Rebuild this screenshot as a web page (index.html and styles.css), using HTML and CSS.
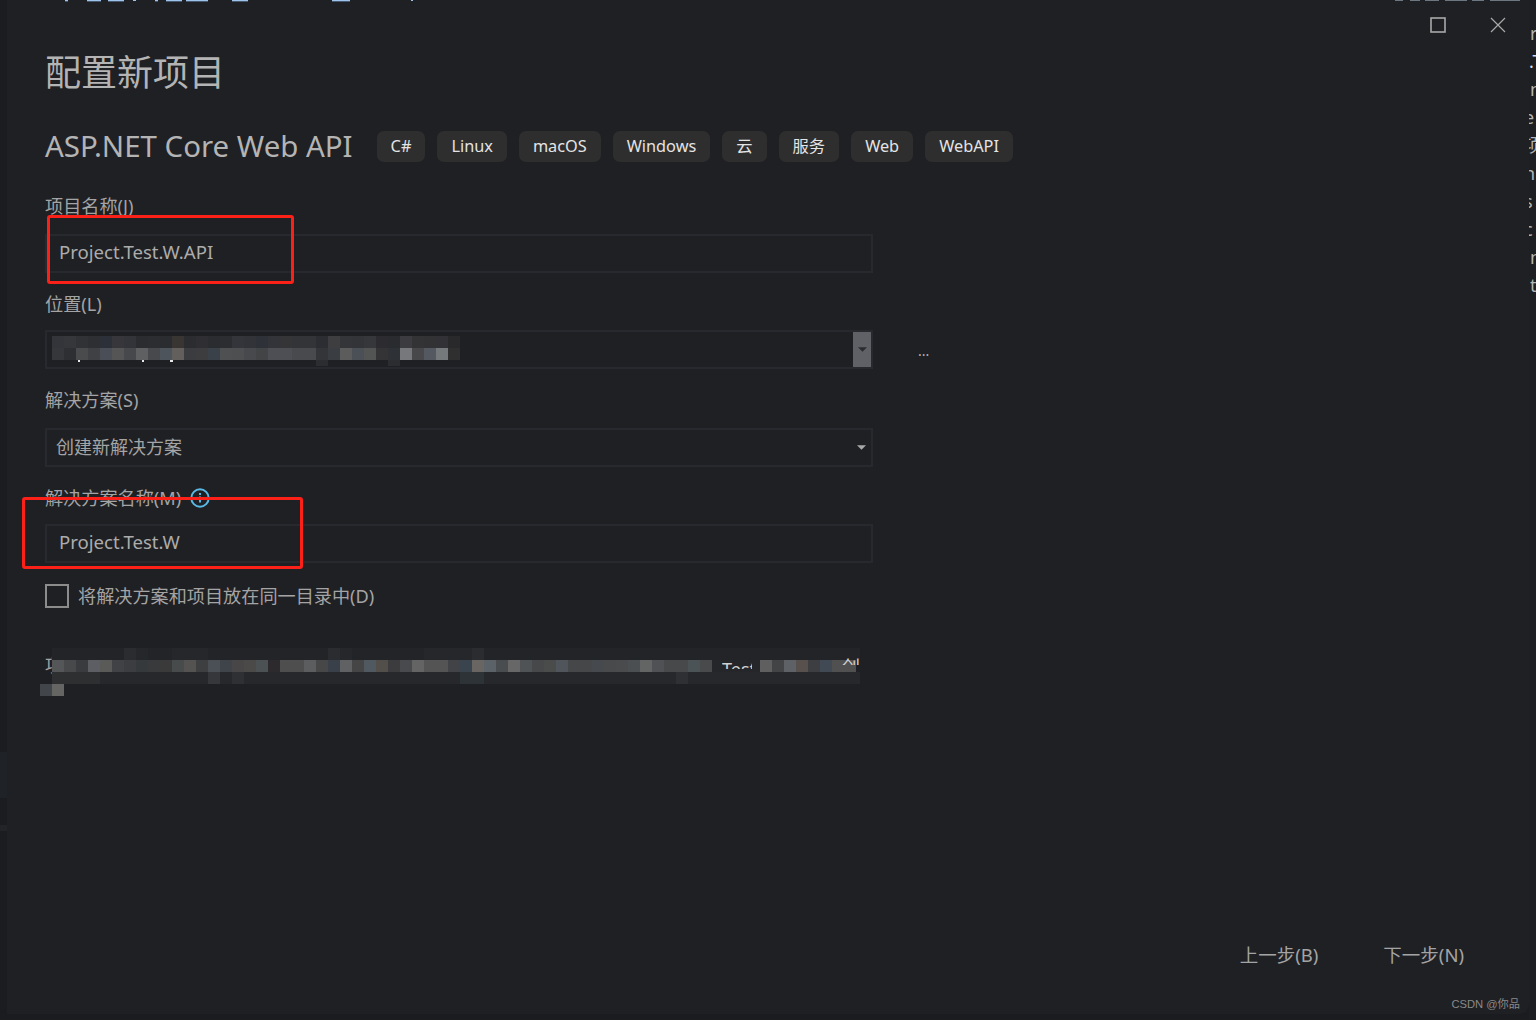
FILE: index.html
```html
<!DOCTYPE html>
<html lang="zh-CN">
<head>
<meta charset="utf-8">
<title>配置新项目</title>
<link rel="stylesheet" href="styles.css">
</head>
<body>
<div class="app">
  <div class="edge-left"><div class="edge-a"></div><div class="edge-b"></div></div>
  <main class="dialog">
    <div class="titlebar">
      <svg class="win-icon" viewBox="0 0 16 16"><rect x="1" y="1" width="14" height="14" fill="none" stroke="#a9a9a9" stroke-width="1.6"/></svg>
      <svg class="win-icon" viewBox="0 0 16 16"><path d="M1 1l14 14M15 1L1 15" fill="none" stroke="#a9a9a9" stroke-width="1.2"/></svg>
    </div>
    <h1 class="page-title">配置新项目</h1>
    <div class="template-row">
      <h2 class="template-name">ASP.NET Core Web API</h2>
      <ul class="tags">
        <li class="tag">C#</li><li class="tag">Linux</li><li class="tag">macOS</li><li class="tag">Windows</li><li class="tag">云</li><li class="tag">服务</li><li class="tag">Web</li><li class="tag">WebAPI</li>
      </ul>
    </div>
    <div class="field">
      <label class="label">项目名称(J)</label>
      <div class="input"><span class="value">Project.Test.W.API</span></div>
    </div>
    <div class="field tight">
      <label class="label">位置(L)</label>
      <div class="location-row">
        <div class="input"><div class="combo-btn"><svg class="caret" viewBox="0 0 10 5"><path d="M0 0h10L5 5z" fill="#2b2c30"/></svg></div></div>
        <span class="browse">...</span>
      </div>
    </div>
    <div class="field">
      <label class="label">解决方案(S)</label>
      <div class="input combo"><span class="value-combo">创建新解决方案</span><svg class="caret" viewBox="0 0 10 5"><path d="M0 0h10L5 5z" fill="#a9a9a9"/></svg></div>
    </div>
    <div class="field tight">
      <label class="label">解决方案名称(M)
        <svg class="info" viewBox="0 0 20 20"><circle cx="10" cy="10" r="8.7" fill="none" stroke="#57b9e4" stroke-width="2"/><path d="M10 8.5v6M10 5v2" stroke="#57b9e4" stroke-width="2"/></svg>
      </label>
      <div class="input"><span class="value">Project.Test.W</span></div>
    </div>
    <div class="check-row">
      <span class="checkbox"></span>
      <span class="check-label">将解决方案和项目放在同一目录中(D)</span>
    </div>
    <p class="desc">项目将在</p>
    <footer class="footer">
      <span class="nav-btn">上一步(B)</span>
      <span class="nav-btn">下一步(N)</span>
    </footer>
  </main>
  <div class="edge-right">
    <span>r</span><span class="dot">.T</span><span>n</span><span class="cut">e</span><span class="cut">项</span><span class="cut">n</span><span class="cut">s</span><span class="cut">c</span><span>n</span><span>t</span>
  </div>

  <svg class="top-specks" viewBox="0 0 1536 2" shape-rendering="crispEdges">
    <path stroke="#9cc4ec" stroke-width="1" d="M65 .5h3M87 .5h14M108 .5h16M133 .5h3M155 .5h3M166 .5h16M186 .5h22M232 .5h16M332 .5h18M411 .5h2"/>
    <path stroke="#47586c" stroke-width="1" d="M65 1.5h3M87 1.5h14M108 1.5h16M155 1.5h3M166 1.5h16M186 1.5h22M232 1.5h16M332 1.5h18"/>
    <path stroke="#6d7782" stroke-width="1" d="M1395 .5h8M1410 .5h10M1425 .5h14M1445 .5h22M1472 .5h12M1490 .5h30"/>
  </svg>

  <svg class="mosaic-loc" viewBox="0 330 480 40" shape-rendering="crispEdges">
    <g stroke-width="12" fill="none">
      <path stroke="#33353a" d="M52 342h12"/><path stroke="#36373a" d="M64 342h12"/><path stroke="#313236" d="M76 342h12"/><path stroke="#2e2f33" d="M88 342h12"/><path stroke="#2c3038" d="M100 342h12"/><path stroke="#37363a" d="M112 342h12"/><path stroke="#32343a" d="M124 342h12"/><path stroke="#2b2c30" d="M136 342h12"/><path stroke="#2c2d31" d="M148 342h12"/><path stroke="#2a2c30" d="M160 342h12"/><path stroke="#383533" d="M172 342h12"/><path stroke="#2b2c30" d="M184 342h12"/><path stroke="#2f2f33" d="M196 342h12"/><path stroke="#2a2c30" d="M208 342h12"/><path stroke="#2c2d31" d="M220 342h12"/><path stroke="#34353a" d="M232 342h12"/><path stroke="#323338" d="M244 342h12"/><path stroke="#2e3238" d="M256 342h12"/><path stroke="#33343a" d="M268 342h12"/><path stroke="#353437" d="M280 342h12"/><path stroke="#333438" d="M292 342h24"/><path stroke="#2b2d32" d="M316 342h12"/><path stroke="#3e3e40" d="M328 342h12"/><path stroke="#343538" d="M340 342h12"/><path stroke="#333438" d="M352 342h12"/><path stroke="#36373a" d="M364 342h12"/><path stroke="#2c2c30" d="M376 342h12"/><path stroke="#2a2b2f" d="M388 342h12"/><path stroke="#3c3c40" d="M400 342h12"/><path stroke="#333234" d="M412 342h12"/><path stroke="#323134" d="M424 342h12"/><path stroke="#323236" d="M436 342h12"/><path stroke="#29282a" d="M448 342h12"/>
      <path stroke="#35373b" d="M52 354h12"/><path stroke="#2e2f33" d="M64 354h12"/><path stroke="#4a4b4d" d="M76 354h12"/><path stroke="#404145" d="M88 354h12"/><path stroke="#4a4e56" d="M100 354h12"/><path stroke="#555556" d="M112 354h12"/><path stroke="#47484b" d="M124 354h12"/><path stroke="#5f6062" d="M136 354h12"/><path stroke="#48494c" d="M148 354h12"/><path stroke="#4e545c" d="M160 354h12"/><path stroke="#635f5c" d="M172 354h12"/><path stroke="#3a3c40" d="M184 354h12"/><path stroke="#3d3d3f" d="M196 354h12"/><path stroke="#3b4149" d="M208 354h12"/><path stroke="#4f5052" d="M220 354h12"/><path stroke="#4e4f51" d="M232 354h12"/><path stroke="#48494c" d="M244 354h12"/><path stroke="#434446" d="M256 354h12"/><path stroke="#4d4f54" d="M268 354h24"/><path stroke="#484a4d" d="M292 354h24"/><path stroke="#333539" d="M316 354h12"/><path stroke="#3a3d41" d="M328 354h12"/><path stroke="#5c5c5d" d="M340 354h12"/><path stroke="#4b5057" d="M352 354h12"/><path stroke="#535454" d="M364 354h12"/><path stroke="#343335" d="M376 354h12"/><path stroke="#2e3136" d="M388 354h12"/><path stroke="#76787c" d="M400 354h12"/><path stroke="#48474a" d="M412 354h12"/><path stroke="#545860" d="M424 354h12"/><path stroke="#76797c" d="M436 354h12"/><path stroke="#302f30" d="M448 354h12"/>
    </g>
    <path stroke="#2c2d30" stroke-width="6" d="M316 363h12M388 363h12"/>
    <path stroke="#e8e8e8" stroke-width="2" d="M78 361h2M142 361h2M170 361h3"/>
  </svg>

  <svg class="mosaic-desc" viewBox="0 640 880 60" shape-rendering="crispEdges">
    <g stroke-width="12" fill="none">
      <path stroke="#232428" d="M52 654h808"/>
      <path stroke="#27282b" d="M52 678h808"/>
      <path stroke="#26272a" d="M124 654h24M172 654h36M328 654h24M424 654h60"/>
      <path stroke="#2b2c2f" d="M124 654h12M328 654h12M472 654h12"/>
      <path stroke="#2e2f31" d="M52 678h48"/>
      <path stroke="#36373a" d="M208 678h12"/>
      <path stroke="#2f3033" d="M232 678h12M676 678h12"/>
      <path stroke="#2e3338" d="M460 678h24"/>
      <path stroke="#555658" d="M52 666h12"/><path stroke="#48494b" d="M64 666h12"/><path stroke="#3a3b3f" d="M76 666h12"/><path stroke="#5c5e63" d="M88 666h12"/><path stroke="#5a5a58" d="M100 666h12"/><path stroke="#414245" d="M112 666h12"/><path stroke="#3c3d40" d="M124 666h12"/><path stroke="#35393c" d="M136 666h12"/><path stroke="#383a3b" d="M148 666h12"/><path stroke="#3a3a3a" d="M160 666h12"/><path stroke="#474b4c" d="M172 666h12"/><path stroke="#545352" d="M184 666h12"/><path stroke="#3e3f41" d="M196 666h12"/><path stroke="#4a5055" d="M208 666h12"/><path stroke="#3f444a" d="M220 666h12"/><path stroke="#484646" d="M232 666h12"/><path stroke="#4b4a49" d="M244 666h12"/><path stroke="#4c5254" d="M256 666h12"/><path stroke="#2d2a2e" d="M268 666h12"/><path stroke="#4e4e4e" d="M280 666h24"/><path stroke="#5c5d5f" d="M304 666h12"/><path stroke="#484747" d="M316 666h12"/><path stroke="#3a404a" d="M328 666h12"/><path stroke="#606162" d="M340 666h12"/><path stroke="#454545" d="M352 666h12"/><path stroke="#505860" d="M364 666h12"/><path stroke="#524f4b" d="M376 666h12"/><path stroke="#3c3c3f" d="M388 666h12"/><path stroke="#484a4e" d="M400 666h12"/><path stroke="#646464" d="M412 666h12"/><path stroke="#545455" d="M424 666h24"/><path stroke="#424346" d="M448 666h12"/><path stroke="#3a444e" d="M460 666h12"/><path stroke="#696562" d="M472 666h12"/><path stroke="#5c6368" d="M484 666h12"/><path stroke="#4a4d50" d="M496 666h12"/><path stroke="#666766" d="M508 666h12"/><path stroke="#505356" d="M520 666h12"/><path stroke="#47484a" d="M532 666h12"/><path stroke="#4a4b4b" d="M544 666h12"/><path stroke="#50555c" d="M556 666h12"/><path stroke="#464748" d="M568 666h24"/><path stroke="#46494d" d="M592 666h12"/><path stroke="#484a4c" d="M604 666h12"/><path stroke="#4a4b4c" d="M616 666h12"/><path stroke="#4c4f52" d="M628 666h12"/><path stroke="#636464" d="M640 666h12"/><path stroke="#4f5154" d="M652 666h12"/><path stroke="#48494a" d="M664 666h24"/><path stroke="#4c5356" d="M688 666h12"/><path stroke="#484a4c" d="M700 666h12"/><path stroke="#25262a" d="M712 666h48"/><path stroke="#5f5f5f" d="M760 666h12"/><path stroke="#434446" d="M772 666h12"/><path stroke="#5e6266" d="M784 666h12"/><path stroke="#57504c" d="M796 666h12"/><path stroke="#3d3e41" d="M808 666h12"/><path stroke="#414a54" d="M820 666h12"/><path stroke="#505050" d="M832 666h24"/>
      <path stroke="#42464b" d="M40 690h12"/><path stroke="#656564" d="M52 690h12"/>
    </g>
  </svg>
  <span class="frag frag-test">Test</span>
  <span class="frag frag-create">创</span>

  <i class="mark mark-name"></i>
  <i class="mark mark-solution"></i>
  <span class="watermark">CSDN @你品</span>
</div>
</body>
</html>
```

FILE: styles.css
```css
* { box-sizing: border-box; }
html, body { margin: 0; height: 100%; }
body {
  background: #1b1c1f;
  font-family: "Noto Sans", "Noto Sans CJK SC", sans-serif;
  color: #a9a9a9;
  overflow: hidden;
}
.app {
  position: relative;
  display: flex;
  width: 1536px;
  height: 1020px;
}
.edge-left {
  width: 7px;
  flex: none;
  padding-top: 752px;
  background: #1b1c1f;
}
.edge-a { height: 46px; background: #1f2226; }
.edge-b { height: 6px; margin-top: 27px; background: #232427; }

.dialog {
  flex: 1;
  height: 1014px;
  padding-left: 38px;
  display: flex;
  flex-direction: column;
  background: #1f2024;
  border-radius: 0 0 10px 0;
}
.titlebar {
  height: 49px;
  flex: none;
  display: flex;
  justify-content: flex-end;
  align-items: flex-start;
  gap: 44px;
  padding: 17px 23px 0 0;
}
.win-icon { width: 16px; height: 16px; display: block; }
.page-title {
  margin: 0;
  font-size: 36px;
  line-height: 48px;
  font-weight: 400;
  color: #b4b4b4;
}
.template-row {
  display: flex;
  align-items: center;
  gap: 24px;
  height: 31px;
  margin-top: 34px;
}
.template-name {
  margin: 0;
  padding-bottom: 2px;
  font-size: 29.45px;
  font-weight: 400;
  color: #b4b4b4;
  white-space: nowrap;
}
.tags {
  display: flex;
  gap: 12px;
  margin: 0;
  padding: 0;
  list-style: none;
}
.tag {
  height: 31px;
  line-height: 31px;
  padding: 0 14px;
  border-radius: 7px;
  background: #2e2e2f;
  color: #e4e4e4;
  font-size: 16.3px;
  white-space: nowrap;
}

.field { margin-top: 19px; width: 828px; }
.template-row + .field { margin-top: 32px; }
.label {
  display: flex;
  align-items: center;
  gap: 9px;
  height: 26px;
  padding-bottom: 2px;
  margin-bottom: 14px;
  font-size: 18.15px;
  line-height: 24px;
  color: #a4a4a4;
}
.tight .label { margin-bottom: 12px; }
.info { width: 20px; height: 20px; flex: none; }
.input {
  display: flex;
  align-items: center;
  width: 828px;
  height: 39px;
  flex: none;
  padding: 0 12px 4px;
  border: 2px solid #28292f;
  background: #1f2024;
}
.value { font-size: 18.6px; color: #acacac; white-space: nowrap; }
.value-combo { font-size: 18px; color: #a4a4a4; white-space: nowrap; margin-left: -3px; }
.combo { justify-content: space-between; padding-right: 5px; }
.combo .caret { margin-top: 4px; }
.location-row { display: flex; align-items: center; width: 900px; }
.location-row .input { justify-content: flex-end; padding: 0; }
.combo-btn {
  display: flex;
  align-items: center;
  justify-content: center;
  width: 18px;
  height: 35px;
  background: #5f6167;
}
.caret { width: 9px; height: 5px; display: block; }
.browse {
  margin-left: 45px;
  font-size: 14px;
  line-height: 14px;
  color: #b4b4b4;
  padding-top: 2px;
}
.check-row {
  display: flex;
  align-items: center;
  gap: 9px;
  height: 24px;
  margin-top: 21px;
}
.checkbox {
  width: 24px;
  height: 24px;
  flex: none;
  border: 2px solid #8c8c8c;
}
.check-label { font-size: 18.15px; line-height: 24px; color: #a4a4a4; white-space: nowrap; padding-bottom: 1px; }
.desc {
  margin: 44px 0 0;
  height: 26px;
  font-size: 18px;
  line-height: 26px;
  color: #a4a4a4;
}
.footer {
  display: flex;
  justify-content: flex-end;
  gap: 65px;
  margin-top: auto;
  padding: 0 65px 46px 0;
}
.nav-btn { font-size: 18.5px; line-height: 26px; color: #a4a4a4; white-space: nowrap; }

.edge-right {
  width: 7px;
  flex: none;
  display: flex;
  flex-direction: column;
  padding-top: 19px;
  background: #1e1f22;
  font-size: 18px;
  line-height: 28px;
  color: #b4b4b4;
  overflow: hidden;
}
.edge-right span { display: block; height: 28px; padding-left: 1px; white-space: nowrap; }
.edge-right .cut { margin-left: -5px; padding-left: 0; }
.edge-right .dot { margin-left: -1px; color: #d8d8f0; }

.top-specks { position: absolute; left: 0; top: 0; width: 1536px; height: 2px; }
.mosaic-loc { position: absolute; left: 0; top: 330px; width: 480px; height: 40px; }
.mosaic-desc { position: absolute; left: 0; top: 640px; width: 880px; height: 60px; }
.frag {
  position: absolute;
  overflow: hidden;
  font-size: 18px;
  line-height: 26px;
  color: #d0d0d0;
}
.frag-test { left: 722px; top: 660px; width: 30px; height: 9px; line-height: 18px; }
.frag-create { left: 842px; top: 656px; width: 18px; height: 9px; line-height: 22px; }
.mark {
  position: absolute;
  display: block;
  border: 3px solid #fb2119;
  border-radius: 3px;
}
.mark-name { left: 47px; top: 215px; width: 247px; height: 69px; }
.mark-solution { left: 22px; top: 497px; width: 281px; height: 72px; }
.watermark {
  position: absolute;
  right: 16px;
  top: 997px;
  font-family: "Liberation Sans", "Noto Sans CJK SC", sans-serif;
  font-size: 11.2px;
  line-height: 14px;
  color: #8a8a8a;
}
```
